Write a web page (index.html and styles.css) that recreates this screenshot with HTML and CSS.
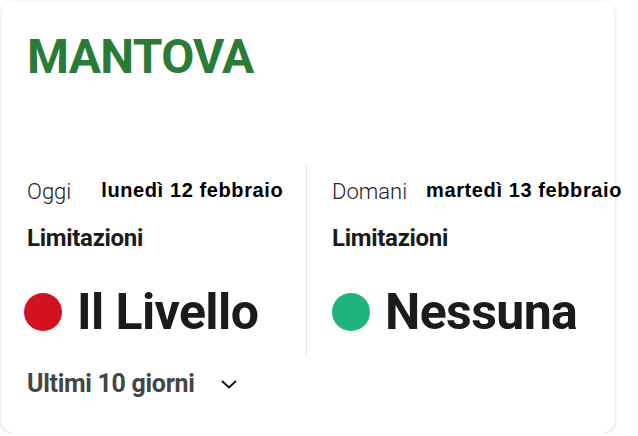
FILE: index.html
```html
<!DOCTYPE html>
<html lang="it">
    <head>
        <meta charset="UTF-8" />
        <meta name="viewport" content="width=device-width, initial-scale=1.0" />
        <title>Mantova - Limitazioni</title>
        <link rel="stylesheet" href="styles.css">
    </head>
    <body>
        <!--Card città-->
        <section class="card">
            <h1 class="city">MANTOVA</h1>

            <div class="days">
                <div class="day day-today">
                    <div class="day-head">
                        <span class="day-label">Oggi</span>
                        <span class="day-date">lunedì 12 febbraio</span>
                    </div>
                    <div class="day-title">Limitazioni</div>
                    <div class="level">
                        <span class="dot dot-red"></span>
                        <span class="level-text">Il Livello</span>
                    </div>
                </div>
                <div class="day day-tomorrow">
                    <div class="day-head">
                        <span class="day-label">Domani</span>
                        <span class="day-date">martedì 13 febbraio</span>
                    </div>
                    <div class="day-title">Limitazioni</div>
                    <div class="level">
                        <span class="dot dot-green"></span>
                        <span class="level-text">Nessuna</span>
                    </div>
                </div>
            </div>

            <!--Storico-->
            <button class="history">
                <span>Ultimi 10 giorni</span>
                <svg width="18" height="12" viewBox="0 0 18 12"><path d="M2 3 L9 9.5 L16 3" fill="none" stroke="#111" stroke-width="2"/></svg>
            </button>
        </section>
    </body>
</html>
```

FILE: styles.css
```css
/* Card città */
:root {
    --green: #2b7b38;
    --dark: #1b1b1b;
    --gray: #454545;
    --line: #e2e2e2;
}
body {
    margin: 0;
    background-color: #fff;
    font-family: Roboto, "Liberation Sans", sans-serif;
}
.card {
    box-sizing: border-box;
    width: 614px;
    height: 432px;
    margin: 1px 0 0 1px;
    padding: 29px 0 0 26px;
    background-color: #fff;
    border-radius: 14px;
    box-shadow: 0 1px 4px rgba(0, 0, 0, 0.14);
}
.city {
    margin: 0;
    color: var(--green);
    font-size: 48px;
    font-weight: 700;
    line-height: 54px;
    letter-spacing: -0.7px;
}
.days {
    display: flex;
    margin-top: 81px;
}
.day {
    box-sizing: border-box;
    height: 192px;
    padding-top: 14px;
}
.day-today {
    flex: 0 0 280px;
    border-right: 1px solid var(--line);
}
.day-tomorrow {
    flex: 0 0 auto;
    padding-left: 25px;
}
.day-head {
    display: flex;
    align-items: baseline;
    gap: 30px;
    white-space: nowrap;
}
.day-label {
    color: #222;
    font-size: 22px;
    font-weight: 300;
}
.day-date {
    position: relative;
    top: -2px;
    color: #000;
    font-family: "Liberation Sans", Arial, sans-serif;
    font-size: 20px;
    font-weight: 700;
    letter-spacing: 0.6px;
}
.day-tomorrow .day-head {
    gap: 19px;
}
.day-title {
    margin-top: 20px;
    color: var(--dark);
    font-size: 24px;
    font-weight: 700;
    letter-spacing: -0.3px;
}
.level {
    display: flex;
    align-items: center;
    gap: 15px;
    margin-top: 35px;
}
.dot {
    flex: 0 0 38px;
    height: 38px;
    border-radius: 50%;
}
.dot-red {
    margin-left: -3px;
    background-color: #d3121f;
}
.dot-green {
    background-color: #1fb47c;
}
.level-text {
    color: var(--dark);
    font-size: 50px;
    font-weight: 700;
    line-height: 50px;
    letter-spacing: -0.6px;
}
.history {
    display: flex;
    align-items: center;
    gap: 25px;
    margin-top: 12px;
    padding: 0;
    border: 0;
    background: none;
    color: var(--gray);
    font-family: inherit;
    font-size: 25px;
    font-weight: 700;
    letter-spacing: -0.3px;
}
```
